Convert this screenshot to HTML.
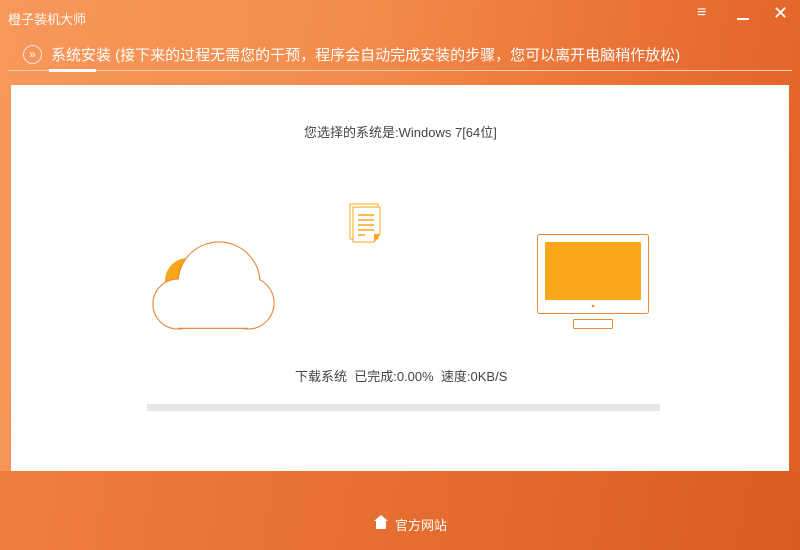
<!DOCTYPE html>
<html><head><meta charset="utf-8"><style>
*{margin:0;padding:0;box-sizing:border-box}
body{width:800px;height:550px;overflow:hidden;position:relative;font-family:"Liberation Sans","Noto Sans CJK SC",sans-serif;
background:linear-gradient(100deg,#f7985a 0%,#f38c4c 40%,#e96f33 75%,#df5f24 100%);}
.bot{position:absolute;left:0;top:471px;width:800px;height:79px;background:linear-gradient(100deg,#ef7e3c,#e46a2e 60%,#d95c22)}
.t{position:absolute;color:#fff;white-space:nowrap}
.panel{position:absolute;left:11px;top:85px;width:778px;height:386px;background:#fff}
</style></head><body>
<div class="bot"></div>
<div class="t" style="left:8px;top:9px;font-size:13px;opacity:.95">橙子装机大师</div>
<div class="t" style="left:697px;top:4px;font-size:16px;font-weight:bold">≡</div>
<div style="position:absolute;left:737px;top:18px;width:12px;height:2px;background:#fff"></div>
<div class="t" style="left:773px;top:3px;font-size:18px">✕</div>
<div style="position:absolute;left:23px;top:45px;width:19px;height:19px;border:1.5px solid #fde;border-radius:50%;color:#fff;font-size:12px;line-height:16px;text-align:center">»</div>
<div class="t" style="left:51px;top:44px;font-size:15px">系统安装 (接下来的过程无需您的干预，程序会自动完成安装的步骤，您可以离开电脑稍作放松)</div>
<div style="position:absolute;left:8px;top:70px;width:784px;height:1px;background:#fbd0b0"></div>
<div style="position:absolute;left:49px;top:69px;width:47px;height:3px;background:#fff"></div>
<div class="panel"></div>
<div class="t" style="left:304px;top:122px;font-size:13px;color:#444">您选择的系统是:Windows 7[64位]</div>
<svg style="position:absolute;left:0;top:0" width="800" height="550">
<circle cx="188" cy="281" r="23" fill="#fba61a"/>
<g fill="none" stroke="#e88a3a" stroke-width="1.2">
<circle cx="178" cy="304" r="25"/><circle cx="219" cy="283" r="41"/><circle cx="248" cy="303" r="26"/>
</g>
<g fill="#fff">
<circle cx="178" cy="304" r="24.4"/><circle cx="219" cy="283" r="40.4"/><circle cx="248" cy="303" r="25.4"/>
<rect x="178" y="300" width="70" height="28"/>
</g>
<line x1="178" y1="328.4" x2="248" y2="328.4" stroke="#e88a3a" stroke-width="1.2"/>
<rect x="350" y="204" width="28" height="35" fill="#fff" stroke="#fba61a" stroke-width="1"/>
<path d="M353 207 H380 V234 L374 242 H353 Z" fill="#fff" stroke="#fba61a" stroke-width="1"/>
<path d="M374 242 L380 234 H374 Z" fill="#fba61a"/>
<g stroke="#fba61a" stroke-width="1.5"><line x1="358" y1="215" x2="374" y2="215"/><line x1="358" y1="220" x2="374" y2="220"/><line x1="358" y1="225" x2="374" y2="225"/><line x1="358" y1="230" x2="374" y2="230"/><line x1="358" y1="235" x2="365" y2="235"/></g>
<rect x="537.5" y="234.5" width="111" height="79" rx="2" fill="#fff" stroke="#e88a3a"/>
<rect x="545" y="242" width="96" height="58" rx="1" fill="#fba61a"/>
<circle cx="593" cy="306" r="1.3" fill="#e88a3a"/>
<rect x="573.5" y="319.5" width="39" height="9" rx="1" fill="#fff" stroke="#e88a3a"/>
<rect x="147" y="404" width="513" height="7" fill="#e6e6e6"/>
<path d="M374 521 L381 515 L388 521 H386 V529 H376 V521 Z" fill="#fff"/>
</svg>
<div class="t" style="left:295px;top:366px;font-size:13px;color:#444">下载系统&nbsp; 已完成:0.00%&nbsp; 速度:0KB/S</div>
<div class="t" style="left:395px;top:515px;font-size:13px">官方网站</div>
</body></html>
